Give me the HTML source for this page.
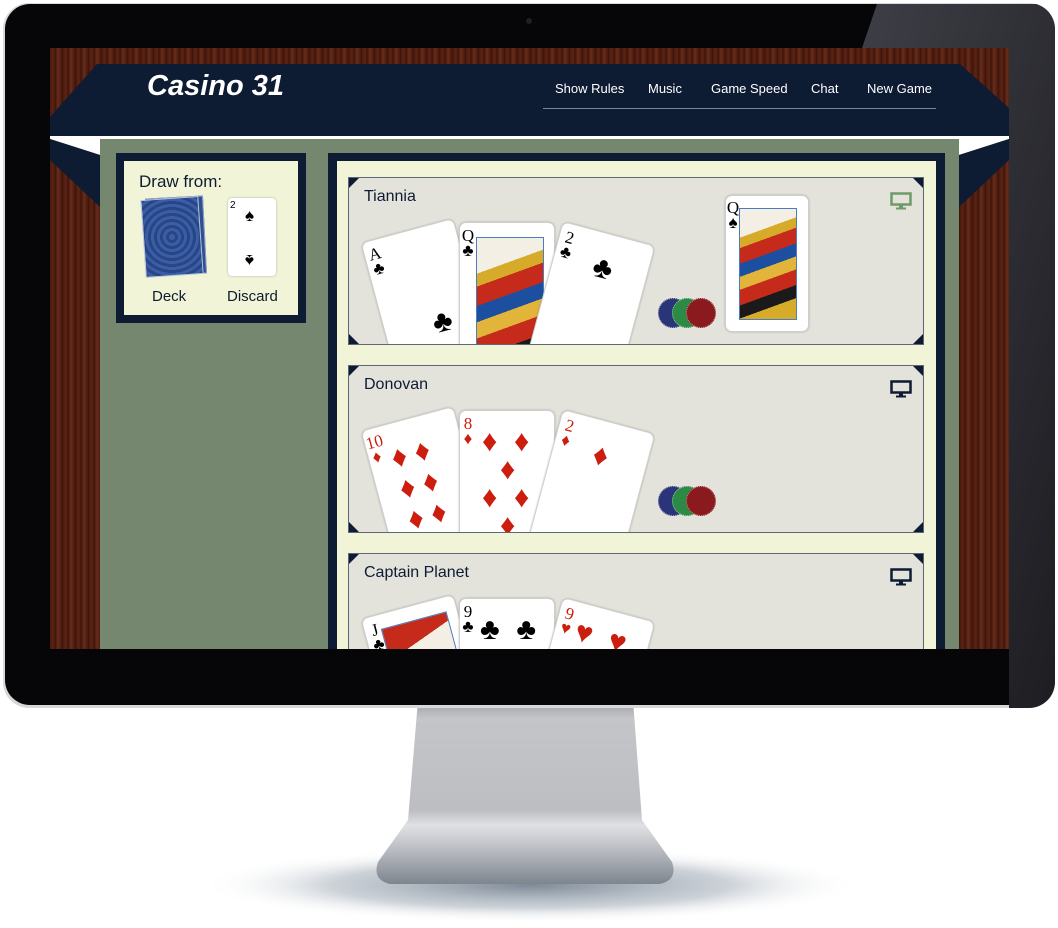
<!DOCTYPE html>
<html><head><meta charset="utf-8"><style>
*{margin:0;padding:0;box-sizing:border-box}
body{width:1058px;height:928px;background:#fff;position:relative;overflow:hidden;font-family:"Liberation Sans",sans-serif}
.abs{position:absolute}
#screen{position:absolute;left:50px;top:48px;width:959px;height:601px;overflow:hidden;
background:repeating-linear-gradient(90deg,#4a1a0e 0,#5e2415 3px,#3c150b 5px,#6a2c19 8px,#4f1d10 11px,#381309 13px)}
.nav{position:absolute;top:33px;color:#fff;font-size:13px}
.panel{position:absolute;background:#0d1b33}
.cream{position:absolute;background:#f1f4d6}
.pbox{position:absolute;left:11px;width:576px;height:168px;background:#e4e3db;border:1px solid #5d6679;overflow:hidden}
.pbox .nm{position:absolute;left:15px;top:10px;font-size:16px;color:#0d1b33}
.tri{position:absolute;width:0;height:0}
.card{position:absolute;width:96px;height:140px;background:#fff;border:1px solid #cfcfcf;border-radius:7px;box-shadow:0 0 2px rgba(0,0,0,.25);overflow:hidden}
.cr{position:absolute;font-size:17px;line-height:15px;text-align:center;width:14px;font-family:"Liberation Serif",serif}
.s{position:absolute;font-size:30px;line-height:30px}
.red{color:#cc1d0e}
.face{position:absolute;left:16px;top:14px;width:68px;height:140px;border:1px solid #4a7cc2;
background:linear-gradient(160deg,#f3efe4 0 22%,#d7ab2a 22% 30%,#c62a1a 30% 42%,#1c4fa0 42% 52%,#e2b43a 52% 62%,#c62a1a 62% 74%,#1a1a1a 74% 84%,#d7ab2a 84%)}
.chip{position:absolute;width:30px;height:30px;border-radius:50%;border:1px dotted rgba(255,255,255,.5)}
</style></head><body>

<svg class="abs" style="left:0;top:0" width="1058" height="928">
<defs>
<clipPath id="bz"><rect x="3" y="3" width="1052" height="705" rx="26"/></clipPath>
<radialGradient id="sh" cx="50%" cy="50%" r="50%"><stop offset="0" stop-color="#6f7d8c" stop-opacity=".9"/><stop offset=".6" stop-color="#9aa5b1" stop-opacity=".5"/><stop offset="1" stop-color="#fff" stop-opacity="0"/></radialGradient>
<linearGradient id="st" x1="0" y1="0" x2="0" y2="1"><stop offset="0" stop-color="#9d9ea3"/><stop offset=".1" stop-color="#c4c5c9"/><stop offset=".6" stop-color="#bdbec2"/><stop offset=".68" stop-color="#e0e1e4"/><stop offset=".85" stop-color="#aeb2b8"/><stop offset="1" stop-color="#7d858f"/></linearGradient>
<linearGradient id="gl" x1="0" y1="0" x2="1" y2="1"><stop offset="0" stop-color="#3e3e46"/><stop offset="1" stop-color="#1d1d22"/></linearGradient>
</defs>
<ellipse cx="530" cy="885" rx="330" ry="38" fill="url(#sh)"/>
<path d="M418 700 L633 700 L642 820 L672 862 Q678 880 660 884 L390 884 Q372 880 378 862 L408 820 Z" fill="url(#st)"/>
<rect x="3" y="3" width="1052" height="705" rx="26" fill="#d8d8da"/>
<rect x="5" y="4" width="1048" height="701" rx="25" fill="#060608"/>
<g clip-path="url(#bz)"><polygon points="877,4 1058,4 1058,708 1009,708 1009,48 862,48" fill="url(#gl)"/></g>
<circle cx="529" cy="21" r="3" fill="#1c1f26"/>
</svg>

<div id="screen">
<svg class="abs" style="left:0;top:0" width="959" height="601">
<polygon points="0,88 959,88 959,91 909,107 909,601 50,601 50,107 0,91" fill="#fff"/>
<rect x="50" y="91" width="859" height="510" fill="#76876f"/>
<polygon points="0,91 50,107 50,159 0,112" fill="#0d1b33"/>
<polygon points="959,91 909,107 909,159 959,112" fill="#0d1b33"/>
<polygon points="47,16 910,16 959,60 959,88 0,88 0,69" fill="#0d1b33"/>
<line x1="493" y1="60.5" x2="886" y2="60.5" stroke="#7d8594" stroke-width="1"/>
</svg>
<div class="abs" style="left:97px;top:22px;color:#fff;font-size:29px;font-weight:bold;font-style:italic">Casino 31</div>
<div class="nav" style="left:505px">Show Rules</div>
<div class="nav" style="left:598px">Music</div>
<div class="nav" style="left:661px">Game Speed</div>
<div class="nav" style="left:761px">Chat</div>
<div class="nav" style="left:817px">New Game</div>

<div class="panel" style="left:66px;top:105px;width:190px;height:170px"></div>
<div class="cream" style="left:74px;top:113px;width:174px;height:154px"></div>
<div class="abs" style="left:89px;top:124px;font-size:17px;color:#0d1b33">Draw from:</div>
<div class="abs" style="left:97px;top:149px;width:58px;height:78px;background:#2f4f8f;border:1px solid #8fa3c9;transform:rotate(-3deg)"></div>
<div class="abs" style="left:93px;top:150px;width:58px;height:78px;background:repeating-radial-gradient(circle at 50% 50%,#3a5ea6 0 3px,#2a4585 3px 6px);border:1px solid #b7c4de;transform:rotate(-4deg)"></div>
<div class="abs" style="left:178px;top:150px;width:48px;height:78px;background:#fff;border-radius:4px;box-shadow:0 0 2px #aaa">
<div class="abs" style="left:2px;top:2px;font-size:10px">2</div><div class="abs" style="left:17px;top:8px;font-size:17px">♠</div><div class="abs" style="left:17px;top:52px;font-size:17px;transform:rotate(180deg)">♠</div></div>
<div class="abs" style="left:102px;top:240px;font-size:15px;color:#0d1b33">Deck</div>
<div class="abs" style="left:177px;top:240px;font-size:15px;color:#0d1b33">Discard</div>

<div class="panel" style="left:278px;top:105px;width:617px;height:520px"></div>
<div class="cream" style="left:287px;top:113px;width:599px;height:520px"></div>

<div class="abs" style="left:287px;top:113px;width:599px;height:488px;overflow:hidden">
<div class="pbox" style="top:16px">
 <div class="tri" style="left:0;top:0;border-top:10px solid #0d1b33;border-right:10px solid transparent"></div>
 <div class="tri" style="right:0;top:0;border-top:10px solid #0d1b33;border-left:10px solid transparent"></div>
 <div class="tri" style="left:0;bottom:0;border-bottom:10px solid #0d1b33;border-right:10px solid transparent"></div>
 <div class="tri" style="right:0;bottom:0;border-bottom:10px solid #0d1b33;border-left:10px solid transparent"></div>
 <div class="nm">Tiannia</div>
 <svg class="abs" style="left:541px;top:14px" width="22" height="18" viewBox="0 0 22 18"><rect x="1.5" y="1.5" width="19" height="11" fill="none" stroke="#6f9a6a" stroke-width="2.5"/><rect x="9" y="13" width="4" height="3" fill="#6f9a6a"/><rect x="6" y="15.5" width="10" height="2" fill="#6f9a6a"/></svg>
 <div class="card" style="left:28px;top:50px;transform:rotate(-15deg)"><div class="cr" style="left:3px;top:6px">A<br>♣</div><div class="s" style="left:48px;top:82px">♣</div></div>
 <div class="card" style="left:110px;top:44px"><div class="cr" style="left:1px;top:5px">Q<br>♣</div><div class="face"></div></div>
 <div class="card" style="left:194px;top:53px;transform:rotate(15deg)"><div class="cr" style="left:3px;top:6px">2<br>♣</div><div class="s" style="left:40px;top:20px">♣</div></div>
 <div class="chip" style="left:309px;top:120px;background:#2a3579"></div>
 <div class="chip" style="left:323px;top:120px;background:#2c8a45"></div>
 <div class="chip" style="left:337px;top:120px;background:#8a1a1e"></div>
 <div class="card" style="left:376px;top:17px;width:84px;height:137px"><div class="cr" style="left:0;top:4px">Q<br>♠</div><div class="face" style="left:13px;top:12px;width:58px;height:112px"></div></div>
</div>

<div class="pbox" style="top:204px">
 <div class="tri" style="left:0;top:0;border-top:10px solid #0d1b33;border-right:10px solid transparent"></div>
 <div class="tri" style="right:0;top:0;border-top:10px solid #0d1b33;border-left:10px solid transparent"></div>
 <div class="tri" style="left:0;bottom:0;border-bottom:10px solid #0d1b33;border-right:10px solid transparent"></div>
 <div class="tri" style="right:0;bottom:0;border-bottom:10px solid #0d1b33;border-left:10px solid transparent"></div>
 <div class="nm">Donovan</div>
 <svg class="abs" style="left:541px;top:14px" width="22" height="18" viewBox="0 0 22 18"><rect x="1.5" y="1.5" width="19" height="11" fill="none" stroke="#0d1b33" stroke-width="2.5"/><rect x="9" y="13" width="4" height="3" fill="#0d1b33"/><rect x="6" y="15.5" width="10" height="2" fill="#0d1b33"/></svg>
 <div class="card red" style="left:28px;top:50px;transform:rotate(-15deg)"><div class="cr" style="left:1px;top:6px">10<br>♦</div><div class="s" style="left:22px;top:20px">♦ ♦</div><div class="s" style="left:22px;top:52px">♦ ♦</div><div class="s" style="left:22px;top:84px">♦ ♦</div></div>
 <div class="card red" style="left:110px;top:44px"><div class="cr" style="left:1px;top:5px">8<br>♦</div><div class="s" style="left:22px;top:16px">♦&nbsp;&nbsp;♦</div><div class="s" style="left:40px;top:44px">♦</div><div class="s" style="left:22px;top:72px">♦&nbsp;&nbsp;♦</div><div class="s" style="left:40px;top:100px">♦</div></div>
 <div class="card red" style="left:194px;top:53px;transform:rotate(15deg)"><div class="cr" style="left:3px;top:6px">2<br>♦</div><div class="s" style="left:40px;top:20px">♦</div></div>
 <div class="chip" style="left:309px;top:120px;background:#2a3579"></div>
 <div class="chip" style="left:323px;top:120px;background:#2c8a45"></div>
 <div class="chip" style="left:337px;top:120px;background:#8a1a1e"></div>
</div>

<div class="pbox" style="top:392px">
 <div class="tri" style="left:0;top:0;border-top:10px solid #0d1b33;border-right:10px solid transparent"></div>
 <div class="tri" style="right:0;top:0;border-top:10px solid #0d1b33;border-left:10px solid transparent"></div>
 <div class="nm">Captain Planet</div>
 <svg class="abs" style="left:541px;top:14px" width="22" height="18" viewBox="0 0 22 18"><rect x="1.5" y="1.5" width="19" height="11" fill="none" stroke="#0d1b33" stroke-width="2.5"/><rect x="9" y="13" width="4" height="3" fill="#0d1b33"/><rect x="6" y="15.5" width="10" height="2" fill="#0d1b33"/></svg>
 <div class="card" style="left:28px;top:50px;transform:rotate(-15deg)"><div class="cr" style="left:3px;top:6px">J<br>♣</div><div class="face" style="background:linear-gradient(160deg,#c62a1a 0 20%,#f3efe4 20% 50%,#4a7cc2 50%)"></div></div>
 <div class="card" style="left:110px;top:44px"><div class="cr" style="left:1px;top:5px">9<br>♣</div><div class="s" style="left:20px;top:16px">♣&nbsp;&nbsp;♣</div></div>
 <div class="card red" style="left:194px;top:53px;transform:rotate(15deg)"><div class="cr" style="left:3px;top:6px">9<br>♥</div><div class="s" style="left:20px;top:14px">♥&nbsp;&nbsp;♥</div></div>
</div>
</div>
</div>
</body></html>
